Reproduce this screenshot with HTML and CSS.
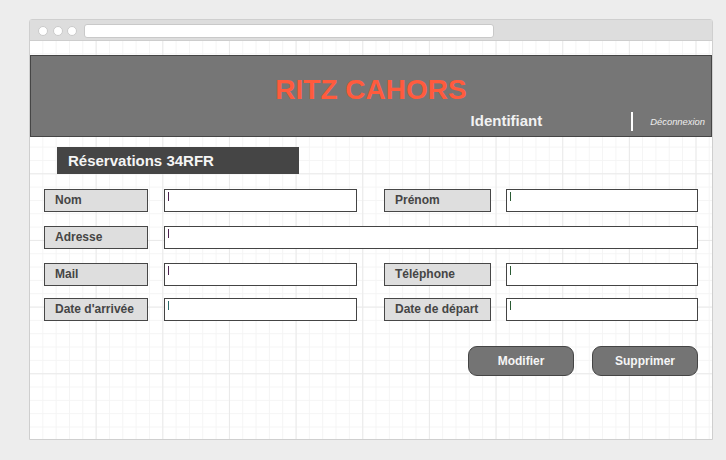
FILE: index.html
```html
<!DOCTYPE html>
<html lang="fr">
<head>
<meta charset="utf-8">
<title>Ritz Cahors - Réservation</title>
<link rel="stylesheet" href="styles.css">
</head>
<body>
<div class="window">
  <div class="titlebar">
    <span class="dot"></span><span class="dot"></span><span class="dot"></span>
    <div class="address"></div>
  </div>
  <div class="canvas">
    <header class="header">
      <h1 class="brand">RITZ CAHORS</h1>
      <div class="userbar">
        <span class="user">Identifiant</span>
        <span class="sep"></span>
        <span class="logout">Déconnexion</span>
      </div>
    </header>

    <div class="section-title">Réservations 34RFR</div>

    <div class="form">
      <div class="row">
        <div class="label">Nom</div>
        <div class="field"><span class="caret"></span></div>
        <div class="label label-right">Prénom</div>
        <div class="field field-right"><span class="caret caret-green"></span></div>
      </div>
      <div class="row">
        <div class="label">Adresse</div>
        <div class="field field-wide"><span class="caret"></span></div>
      </div>
      <div class="row">
        <div class="label">Mail</div>
        <div class="field"><span class="caret"></span></div>
        <div class="label label-right">Téléphone</div>
        <div class="field field-right"><span class="caret caret-green"></span></div>
      </div>
      <div class="row row-last">
        <div class="label">Date d'arrivée</div>
        <div class="field"><span class="caret caret-teal"></span></div>
        <div class="label label-right">Date de départ</div>
        <div class="field field-right"><span class="caret caret-green"></span></div>
      </div>
      <div class="actions">
        <button class="btn">Modifier</button>
        <button class="btn">Supprimer</button>
      </div>
    </div>
  </div>
</div>
</body>
</html>
```

FILE: styles.css
```css
* { box-sizing: border-box; }

html, body {
  margin: 0;
  padding: 0;
  background: #ededed;
  font-family: "Liberation Sans", Arial, sans-serif;
}

.window {
  margin: 19px 0 0 29px;
  width: 684px;
  height: 421px;
  border: 1px solid #cfcfcf;
  border-radius: 3px 3px 0 0;
  background: #fff;
  display: flex;
  flex-direction: column;
}

.titlebar {
  height: 21px;
  background: #dddddd;
  border-bottom: 1px solid #cdcdcd;
  display: flex;
  align-items: center;
  padding: 1px 0 0 8px;
  gap: 4.5px;
}

.dot {
  width: 10px;
  height: 10px;
  border-radius: 50%;
  background: #fff;
  border: 1px solid #cacaca;
  flex: none;
}

.address {
  margin-left: 2px;
  width: 410px;
  height: 14px;
  background: #fff;
  border: 1px solid #c9c9c9;
  border-radius: 3px;
}

.canvas {
  flex: 1;
  padding-top: 14px;
  background-color: #fff;
  background-image:
    linear-gradient(to right, #eaeaea 1px, transparent 1px),
    linear-gradient(to bottom, #eaeaea 1px, transparent 1px),
    linear-gradient(to right, #f4f4f4 1px, transparent 1px),
    linear-gradient(to bottom, #f4f4f4 1px, transparent 1px);
  background-size:
    66.667px 66.667px,
    66.667px 66.667px,
    13.333px 13.333px,
    13.333px 13.333px;
  background-position: -1px -1px;
}

.header {
  height: 82px;
  background: #767676;
  border: 1px solid #454545;
  display: flex;
  flex-direction: column;
  padding-top: 18px;
}

.brand {
  margin: 0;
  text-align: center;
  font-size: 28px;
  line-height: 32px;
  font-weight: bold;
  color: #ff5b3d;
}

.userbar {
  margin-top: 4px;
  height: 22px;
  display: flex;
  align-items: center;
  justify-content: flex-end;
  padding-right: 6px;
}

.user {
  font-size: 15px;
  font-weight: bold;
  color: #f2f2f2;
  line-height: 22px;
}

.sep {
  width: 2px;
  height: 19px;
  background: #fff;
  margin: 0 17px 0 89px;
}

.logout {
  font-size: 9.4px;
  font-style: italic;
  color: #eeeeee;
  line-height: 22px;
  padding-top: 2px;
}

.section-title {
  margin: 10px 0 0 27px;
  width: 242px;
  height: 27px;
  line-height: 27px;
  background: #454545;
  color: #f4f4f4;
  font-weight: bold;
  font-size: 15px;
  padding-left: 11px;
}

.form {
  padding: 0 14px;
}

.row {
  display: grid;
  grid-template-columns: 104px 16px 193px 27px 107px 15px 192px;
  height: 23px;
  margin-top: 14px;
}

.row:first-child { margin-top: 15px; }
.row-last { margin-top: 12px; }

.label { grid-column: 1; }
.field { grid-column: 3; }
.label-right { grid-column: 5; }
.field-right { grid-column: 7; }
.field-wide { grid-column: 3 / 8; }

.label {
  background: #dedede;
  border: 1px solid #474747;
  color: #454545;
  font-weight: bold;
  font-size: 12px;
  line-height: 21px;
  padding-left: 10px;
  white-space: nowrap;
}

.field {
  background: #fff;
  border: 1px solid #444;
  padding: 2px 3px;
}

.caret {
  display: block;
  width: 1px;
  height: 9px;
  background: #4e2350;
}

.caret-green { background: #2a5a33; }
.caret-teal { background: #2a6b6b; }

.actions {
  margin-top: 25px;
  display: flex;
  justify-content: flex-end;
  gap: 18px;
}

.btn {
  width: 106px;
  height: 30px;
  background: #747474;
  border: 1px solid #454545;
  border-radius: 9px;
  color: #f6f6f6;
  font-family: "Liberation Sans", Arial, sans-serif;
  font-weight: bold;
  font-size: 12px;
  padding: 0;
}
```
